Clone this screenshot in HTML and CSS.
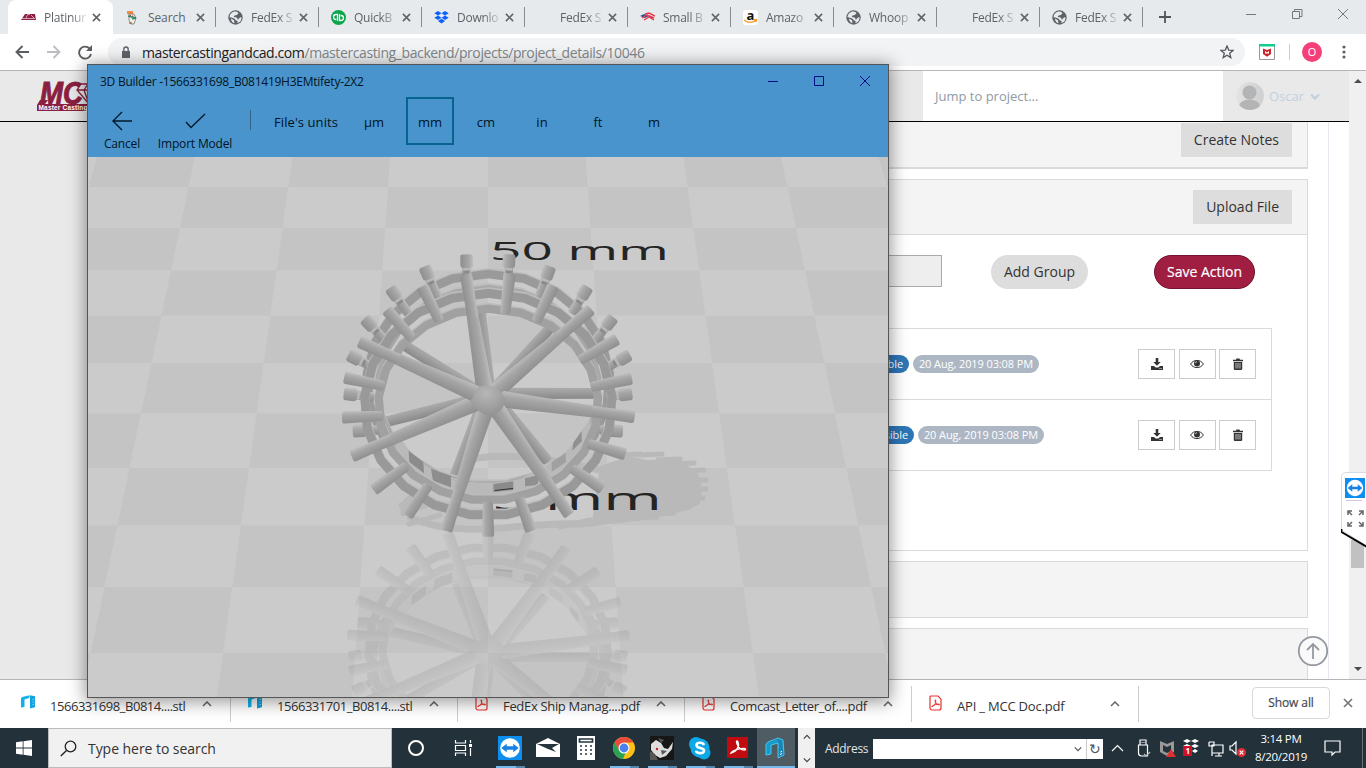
FILE: index.html
```html
<!DOCTYPE html>
<html lang="en">
<head>
<meta charset="utf-8">
<title>Platinum Projects</title>
<link rel="stylesheet" href="styles.css">
</head>
<body>
<svg class="defs" width="0" height="0">
  <defs>
    <symbol id="x" viewBox="0 0 10 10"><path d="M1 1l8 8M9 1l-8 8" fill="none" stroke="currentColor" stroke-width="1.7"/></symbol>
    <symbol id="globe" viewBox="0 0 15 15"><circle cx="7.5" cy="7.5" r="7.2" fill="#5f6368"/><path d="M6.2 1.6C8 1.2 10 2 10.4 3.2L8.8 5 6.5 5.4 5.8 7l3 .5 1 2.2L12 7.4l1.4-.4c.5 3-1.2 5.4-4 6.3l.3-2-2.2-1.4L6.3 8.6 2.4 7.2l-.9.1C1.8 4.2 3.7 2.3 6.2 1.6z" fill="#e6eaed"/><path d="M3 8.4l3 1.8.4 3C4.4 12.7 3 10.8 3 8.4z" fill="#e6eaed"/></symbol>
    <symbol id="caret" viewBox="0 0 10 6"><path d="M1 5l4-4 4 4" fill="none" stroke="currentColor" stroke-width="1.5"/></symbol>
    <symbol id="pdf" viewBox="0 0 13 16"><path d="M2 1h7l3 3.2V13a2 2 0 0 1-2 2H3a2 2 0 0 1-2-2V2a1 1 0 0 1 1-1z" fill="#fff" stroke="#e5322d" stroke-width="1.2"/><path d="M3 11.7c2.5-1 4.2-3.6 3.7-6.3-.2-1-1-.7-.7.3.6 2.500 2 3.900 4 4.300 1 .1.900-1-.3-.9-2 .1-5 .8-6.500 1.900-.6.500-.6 1-.2.700z" fill="none" stroke="#e5322d" stroke-width="1"/></symbol>
    <symbol id="builder" viewBox="0 0 15 14"><path d="M0 12.500V4q0-1.500 1.300-2L8.500.3v2.500L3.500 4.500V12z" fill="#12b0ea"/><path d="M9 .3l5 1v11L9 13.500z" fill="#12a4df"/><path d="M11.500 4.500h1.500M11.500 7h1.500M11.500 9.500h1.500" stroke="#bfe9fa" stroke-width=".6"/></symbol>
    <symbol id="viewer" viewBox="0 0 22 22"><path d="M0 0h22v22H0z" fill="#0d8ff0"/><circle cx="11" cy="11" r="9" fill="#fff"/><path d="M3 11l5-4v2.500h6V7l5 4-5 4v-2.500H8V15z" fill="#1781e3"/></symbol>
    <symbol id="download" viewBox="0 0 12 12"><path d="M4.700 0h2.600v4h2.400L6 7.800 2.300 4h2.400zM0 8h3l1.700 1.500h2.600L9 8h3v4H0z" fill="#333"/><path d="M8 10.500h3" stroke="#bbb" stroke-width=".7"/></symbol>
    <symbol id="eye" viewBox="0 0 14 10"><path d="M.6 5C3.500.2 10.500.2 13.400 5 10.500 9.800 3.500 9.800.6 5z" fill="none" stroke="#333" stroke-width="1"/><circle cx="7" cy="4.400" r="3" fill="#333"/><path d="M5.300 4.200A2 2 0 0 1 7 2.600" stroke="#fff" stroke-width=".7" fill="none"/></symbol>
    <symbol id="trash" viewBox="0 0 10 12"><path d="M0 1.800h3L3.500.5h3L7 1.800h3v1.500H0zM.8 4h8.400v7.200l-.8.800H1.600l-.8-.8z" fill="#333"/><path d="M3 5v5.500M5 5v5.500M7 5v5.500" stroke="#fff" stroke-width=".7"/></symbol>
  </defs>
</svg>

<header class="tabs">
  <div class="tab active"><svg class="fav" viewBox="0 0 15 15"><path d="M0 10l4-6h3l1 1 1-1h5l1 6z" fill="#8d1f41"/><path d="M1 8.500h13M7 4l-2 4m5-3l3 3" stroke="#fff" stroke-width=".6"/></svg><span class="name">Platinur</span><svg class="close"><use href="#x"/></svg></div>
  <div class="tab"><svg class="fav" viewBox="0 0 15 15"><path d="M2 1h6v3H2z" fill="#f28c48"/><path d="M4 4h5l2 4-2 6H6L4 10z" fill="#f4efe5" stroke="#666" stroke-width=".7"/><path d="M3 6l8 2M7 9l4-1" stroke="#28876a" stroke-width="1.800"/><path d="M5 5.500h1m1 .5h1M4 13h3" stroke="#a74020"/></svg><span class="name full">Search</span><svg class="close"><use href="#x"/></svg></div>
  <div class="tab"><svg class="fav"><use href="#globe"/></svg><span class="name">FedEx S</span><svg class="close"><use href="#x"/></svg></div>
  <div class="tab"><svg class="fav" viewBox="0 0 15 15"><circle cx="7.500" cy="7.500" r="7.500" fill="#0ba54c"/><path d="M6.500 10.800V4.500H5a2.500 2.500 0 0 0 0 5h.3M8.500 4.200v6.300H10a2.500 2.500 0 0 0 0-5h-.3" fill="none" stroke="#fff" stroke-width="1.300"/></svg><span class="name">QuickB</span><svg class="close"><use href="#x"/></svg></div>
  <div class="tab"><svg class="fav" viewBox="0 0 15 15"><path d="M4 1l3.500 2.200L4 5.500.3 3.200zM11 1l3.700 2.200L11 5.500 7.500 3.200zM4 5.500l3.500 2.200L4 10 .3 7.700zM11 5.500l3.700 2.200L11 10 7.500 7.700zM4 11l3.500-2.300L11 11l-3.500 2.500z" fill="#0d62fe"/></svg><span class="name">Downlo</span><svg class="close"><use href="#x"/></svg></div>
  <div class="tab"><i class="fav"></i><span class="name">FedEx S</span><svg class="close"><use href="#x"/></svg></div>
  <div class="tab"><svg class="fav" viewBox="0 0 15 15"><path d="M0 6l4-2 5 2-4 2z" fill="#31549b"/><path d="M5 4l4-1 6 3M2 8l5-3 7 3M4 10l5-3 5 3" fill="none" stroke="#e2384c" stroke-width="1.400"/></svg><span class="name">Small B</span><svg class="close"><use href="#x"/></svg></div>
  <div class="tab"><i class="fav amazon">a<svg viewBox="0 0 15 5"><path d="M1 1Q7 5.500 12.500 1.500M11 .8l2.500-.1-.6 2.300" fill="none" stroke="#f49b23" stroke-width="1.400"/></svg></i><span class="name">Amazo</span><svg class="close"><use href="#x"/></svg></div>
  <div class="tab"><svg class="fav"><use href="#globe"/></svg><span class="name">Whoop</span><svg class="close"><use href="#x"/></svg></div>
  <div class="tab"><i class="fav"></i><span class="name">FedEx S</span><svg class="close"><use href="#x"/></svg></div>
  <div class="tab"><svg class="fav"><use href="#globe"/></svg><span class="name">FedEx S</span><svg class="close"><use href="#x"/></svg></div>
  <svg class="plus" viewBox="0 0 12 12"><path d="M6 0v12M0 6h12" stroke="#50555a" stroke-width="1.800"/></svg>
  <svg class="winctl" viewBox="0 0 104 12"><path d="M1 6.500h10M47.500 3.500h7v7h-7zM49.500 3v-1.500h7.500v7H55M93 1l10 10M103 1L93 11" fill="none" stroke="#777"/></svg>
</header>

<nav class="toolbar">
  <svg class="navicons" viewBox="0 0 80 16"><g fill="none" stroke-width="1.900"><path d="M15 8H2.500m6-6l-6 6 6 6" stroke="#5a5e62"/><path d="M33 8h12.500m-6-6l6 6-6 6" stroke="#bcbec1"/><path d="M75.500 4.500A6 6 0 1 0 77 10" stroke="#5a5e62"/></g><path d="M78 1v6h-6z" fill="#5a5e62"/></svg>
  <div class="omnibox">
    <svg class="lock" viewBox="0 0 10 12"><path d="M1 5h8v7H1z" fill="#5f6368"/><path d="M2.800 5V3.200a2.200 2.200 0 0 1 4.400 0V5" fill="none" stroke="#5f6368" stroke-width="1.400"/></svg>
    <span class="url"><b>mastercastingandcad.com</b>/mastercasting_backend/projects/project_details/10046</span>
    <svg class="star" viewBox="0 0 14 14"><path d="M7 1l1.700 4.100 4.400.3-3.400 2.900 1.100 4.300L7 10.200l-3.800 2.400 1.100-4.300L.9 5.400l4.400-.3z" fill="none" stroke="#53575b" stroke-width="1.300"/></svg>
  </div>
  <svg class="shield" viewBox="0 0 16 16"><path d="M.5.500h15v15H.5z" fill="#fff" stroke="#999"/><path d="M0 0h16v2.500H0z" fill="#13ce8b"/><path d="M4 4.500l4 1.600 4-1.600V10l-4 2.800L4 10z" fill="#c9252c"/><path d="M6 7l2 1.500L10 7v2.500H6z" fill="#fff"/></svg>
  <i class="split"></i>
  <span class="avatar">O</span>
  <svg class="dots" viewBox="0 0 4 14"><g fill="#5f6368"><circle cx="2" cy="2" r="1.600"/><circle cx="2" cy="7" r="1.600"/><circle cx="2" cy="12" r="1.600"/></g></svg>
</nav>

<main class="page">
  <div class="site">
    <div class="sitehead">
      <svg class="logo" viewBox="0 0 78 32"><path d="M0 25L3 20h8l-3 4h70v7H0z" fill="#8a1f42"/><text x="3" y="24" class="mark" textLength="43" lengthAdjust="spacingAndGlyphs">MC</text><path d="M44 4h18l4 6-14 14-12-14zM40 10h26M52 24l-5-14 4-6 6 6z" fill="#e9e9e9" stroke="#8a1f42" stroke-width="1.300"/><text x="1.500" y="30" class="logotext" textLength="49">Master Casting</text></svg>
      <div class="jump">Jump to project...</div>
      <div class="user"><svg class="person" viewBox="0 0 28 28"><defs><clipPath id="face"><circle cx="14" cy="14" r="14"/></clipPath><linearGradient id="pg"><stop stop-color="#e4e4e4"/><stop offset="1" stop-color="#cfcfcf"/></linearGradient></defs><g clip-path="url(#face)"><circle cx="14" cy="14" r="14" fill="url(#pg)"/><circle cx="13.500" cy="10.500" r="7" fill="#b3b4b5"/><ellipse cx="13.500" cy="25.500" rx="11" ry="8" fill="#b3b4b5"/></g></svg><span>Oscar</span><svg class="down" viewBox="0 0 10 7"><path d="M1 1.500l4 4 4-4" fill="none" stroke="#c3d0e0" stroke-width="2.400"/></svg></div>
    </div>
    <div class="content">
      <div class="column">
        <section class="panel notes"><button class="btn">Create Notes</button></section>
        <section class="panel files">
          <div class="panelhead"><button class="btn">Upload File</button></div>
          <div class="actions"><div class="field"></div><button class="pill">Add Group</button><button class="pill save">Save Action</button></div>
          <div class="list">
            <div class="row"><span class="tag blue first">Visible</span><span class="tag">20 Aug, 2019 03:08 PM</span><span class="ops"><i><svg class="dl"><use href="#download"/></svg></i><i><svg class="ey"><use href="#eye"/></svg></i><i><svg class="tr"><use href="#trash"/></svg></i></span></div>
            <div class="row"><span class="tag blue second">Visible</span><span class="tag">20 Aug, 2019 03:08 PM</span><span class="ops"><i><svg class="dl"><use href="#download"/></svg></i><i><svg class="ey"><use href="#eye"/></svg></i><i><svg class="tr"><use href="#trash"/></svg></i></span></div>
          </div>
        </section>
        <section class="panel blank"></section>
        <section class="panel tail"></section>
      </div>
    </div>
  </div>
  <div class="scroll"><svg viewBox="0 0 8 5"><path d="M0 5l4-4 4 4z" fill="#4d4d4d"/></svg><i class="thumb"></i><svg viewBox="0 0 8 5"><path d="M0 0l4 4 4-4z" fill="#4d4d4d"/></svg></div>
  <svg class="totop" viewBox="0 0 32 32"><circle cx="16" cy="16" r="14.200" fill="#fafafa" stroke="#9499a1" stroke-width="1.800"/><path d="M16 24V9m-6 6l6-6 6 6" fill="none" stroke="#9499a1" stroke-width="1.800"/></svg>
  <svg class="sidepanel" viewBox="0 0 25 76"><path d="M26 .5H5Q.5 1 .5 5v53l25.500 16z" fill="#fff" stroke="#d5dbe0"/><path d="M.5 57v3L26 75" fill="none" stroke="#000" stroke-width="1.800"/><use href="#viewer" x="4" y="6" width="20" height="20"/><path d="M5 28.500h16" stroke="#ccd"/><g fill="none" stroke="#666" stroke-width="1.500"><path d="M7 43v-4h4M7 39l4 4M18 39h4v4M22 39l-4 4M7 50v4h4M7 54l4-4M18 54h4v-4M22 54l-4-4"/></g></svg>
</main>

<div class="shelf">
  <div class="dlitem"><svg class="bicon"><use href="#builder"/></svg><span class="d1">1566331698_B0814....stl</span><svg class="caret"><use href="#caret"/></svg></div>
  <div class="dlitem"><svg class="bicon"><use href="#builder"/></svg><span class="d1">1566331701_B0814....stl</span><svg class="caret"><use href="#caret"/></svg></div>
  <div class="dlitem"><svg class="picon"><use href="#pdf"/></svg><span class="d3">FedEx Ship Manag....pdf</span><svg class="caret"><use href="#caret"/></svg></div>
  <div class="dlitem"><svg class="picon"><use href="#pdf"/></svg><span class="d4">Comcast_Letter_of....pdf</span><svg class="caret"><use href="#caret"/></svg></div>
  <div class="dlitem"><svg class="picon"><use href="#pdf"/></svg><span class="d5">API _ MCC Doc.pdf</span><svg class="caret"><use href="#caret"/></svg></div>
  <button class="showall">Show all</button>
  <svg class="shelfclose"><use href="#x"/></svg>
</div>

<footer class="taskbar">
  <div class="start"><svg viewBox="0 0 16 16"><path d="M0 2.300L6.700 1.300V7.600H0zM7.500 1.200L16 0v7.600H7.500zM0 8.400h6.700v6.300L0 13.700zM7.500 8.400H16V16l-8.500-1.200z" fill="#fff"/></svg></div>
  <div class="search"><svg viewBox="0 0 17 17"><circle cx="10.500" cy="6.500" r="5.300" fill="none" stroke="#222" stroke-width="1.300"/><path d="M6.500 10.500L.8 16" stroke="#222" stroke-width="1.400"/></svg><span>Type here to search</span></div>
  <div class="apps">
    <div class="app wide"><svg viewBox="0 0 24 24"><circle cx="12" cy="12" r="7" fill="none" stroke="#fff" stroke-width="2"/></svg></div>
    <div class="app wide"><svg viewBox="0 0 24 24"><path d="M4.500 4v3h10V4M4.500 20v-3h10v3M4.500 9.500h10v5h-10zM19.500 4v3m0 5v8" fill="none" stroke="#fff" stroke-width="1.200"/><path d="M18 8h3v3h-3z" fill="#fff"/></svg></div>
    <div class="app viewer run"><svg viewBox="0 0 24 24"><use href="#viewer"/></svg></div>
    <div class="app"><svg viewBox="0 0 24 24"><path d="M0 8l12-6 12 6v13H0z" fill="#fff"/><path d="M1 8h22l-7 4 4 4-8-3z" fill="#26363e"/></svg></div>
    <div class="app"><svg viewBox="0 0 24 24"><path d="M3 0h18v24H3z" fill="#fff"/><path d="M5.500 3h13v3h-13zM6 10h2m3 0h2m3 0h2M6 14h2m3 0h2m3 0h2M6 18h2m3 0h2m3 0h2" fill="none" stroke="#26363e" stroke-width="1.700"/></svg></div>
    <div class="app run"><svg viewBox="0 0 24 24"><circle cx="12" cy="12" r="11" fill="#fbc116"/><path d="M2.500 6.500A11 11 0 0 1 21.500 6.500H12l-5 8z" fill="#e94b3c"/><path d="M2.500 6.500l5 8 6.500 1-3 7.500A11 11 0 0 1 2.500 6.500z" fill="#28a354"/><circle cx="12" cy="12" r="5.500" fill="#fff"/><circle cx="12" cy="12" r="4.400" fill="#4b81ef"/></svg></div>
    <div class="app run"><svg viewBox="0 0 24 24"><path d="M0 0h24v24H0z" fill="#171717"/><path d="M1 8l5-4 5 3 3 5 4 1 5-7-1 7-6 7-6 2-5-3-4-5z" fill="#ddd"/><path d="M0 15l5 3 3 6H0zM8 2l6 2-3 3zM11 14l6 1-5 4z" fill="#565656"/><circle cx="7" cy="13" r="1.200" fill="#c22"/></svg></div>
    <div class="app run"><svg viewBox="0 0 24 24"><circle cx="12" cy="12" r="9.500" fill="#0ca9e6"/><circle cx="8" cy="8" r="7" fill="#0ca9e6"/><circle cx="16" cy="17" r="6.500" fill="#0ca9e6"/><path d="M16 9C15 6 8.500 6 8.500 9.200c0 3.800 7.500 2 7.500 5.500 0 3.400-7.300 3-8 0" fill="none" stroke="#fff" stroke-width="2.600"/></svg></div>
    <div class="app run"><svg viewBox="0 0 24 24"><path d="M1 1h21v21H1z" fill="#c00c10"/><path d="M5 17c5-1 9-6 7-11-.7-2-2-1-1.300 1 1.300 4 4 7 7.600 7 2 0 1.500-1.700-1-1.600-5 .2-11 2.300-12.300 4.600z" fill="none" stroke="#fff" stroke-width="1.400"/></svg></div>
    <div class="app run current"><svg viewBox="0 0 24 24"><path d="M2 19V9q0-2 2-3l10-3v4L7 9v9z" fill="#159bcb"/><path d="M14 2l5 2 1 15-6 3z" fill="#1a86b4"/><path d="M2 19V9q0-2 2-3l10-4 5 2 1 15-6 3V7L7 9v9z" fill="none" stroke="#47c6ed" stroke-width="1"/><path d="M16 18.500l2-1M16.500 16l1.500-.7" stroke="#fff"/></svg></div>
  </div>
  <div class="spin"><svg><use href="#caret"/></svg><svg class="flip"><use href="#caret"/></svg></div>
  <span class="addr">Address</span>
  <div class="addrbox"><svg class="flip"><use href="#caret"/></svg><span>↻</span></div>
  <svg class="tray" viewBox="0 0 140 24"><g fill="none" stroke="#fff" stroke-width="1.200"><path d="M1 15l5.500-5.500L12 15"/><path d="M29 9V4h6v5M27.500 9h9v11h-6q-3 0-3-3zM30.500 6.500h1m1 0h1"/><path d="M33 18l2 2 4-4" stroke="#bbb"/><path d="M101 9h11v8h-11zM98 6v4h5V6h-5m3 4v10m3 0h7m-3-3v3"/><path d="M119 10h2l4-4v12l-4-4h-2z"/></g><path d="M49 5l7 3 7-3v11l-7 4-7-4zM52 9v6l4 2 4-2V9l-4 2z" fill="#999" fill-rule="evenodd"/><path d="M60 13l5 8H55z" fill="#df3030"/><path d="M76 3l4 2-4 2-4-2zM84 3l4 2-4 2-4-2zM76 8l4 2-4 2-4-2zM84 8l4 2-4 2-4-2zM84 13l3 2-3 2-3-2z" fill="#fff"/><path d="M72 10h9v10h-9z" fill="#d1102b"/><text x="74.500" y="18" class="badge">1</text><circle cx="130.500" cy="16.500" r="4.500" fill="#e02d35"/><path d="M128.700 14.700l3.600 3.600m0-3.600l-3.600 3.600" stroke="#fff" stroke-width="1.200"/></svg>
  <div class="clock"><span>3:14 PM</span><span>8/20/2019</span></div>
  <svg class="notif" viewBox="0 0 18 18"><path d="M1 2h15v11h-5l-3 3v-3H1z" fill="none" stroke="#fff" stroke-width="1.200"/></svg>
  <i class="desk"></i>
</footer>

<div class="window">
  <div class="bar">
    <div class="title"><span>3D Builder -1566331698_B081419H3EMtifety-2X2</span><svg viewBox="0 0 104 12"><path d="M1 6.500h10M47.500 1.500h9v9h-9zM93 1l10 10M103 1L93 11" fill="none" stroke="#000c84"/></svg></div>
    <div class="commands">
      <div class="cmd cancel"><svg viewBox="0 0 22 20"><path d="M21 10H2m9-9l-9 9 9 9" fill="none" stroke="#001a2c" stroke-width="1.400"/></svg><span>Cancel</span></div>
      <div class="cmd import"><svg viewBox="0 0 22 20"><path d="M2 11l5 5.500L21 3" fill="none" stroke="#001a2c" stroke-width="1.400"/></svg><span>Import Model</span></div>
      <i class="rule"></i>
      <span class="units">File's units</span>
      <div class="choices"><span>µm</span><span class="on">mm</span><span>cm</span><span>in</span><span>ft</span><span>m</span></div>
    </div>
  </div>
  <svg class="scene" viewBox="88 157 800 540" id="scene">
    <defs><radialGradient id="hub" cx=".45" cy=".25" r=".8"><stop stop-color="#b7b7b7"/><stop offset="1" stop-color="#909090"/></radialGradient></defs>
    <g id="floor"></g>
    <g id="shade" fill="#b9b9b9" stroke="#b9b9b9"></g>
    <text class="scale" transform="translate(490 259.500)" font-size="26" textLength="179" lengthAdjust="spacingAndGlyphs">50 mm</text>
    <text class="scale" transform="translate(492 509.500)" font-size="31" textLength="170" lengthAdjust="spacingAndGlyphs">5 mm</text>
    <g id="mirror" transform="translate(488 651) scale(.965 -.9) translate(-488 -400)" opacity=".24"></g>
    <g id="wheel"></g>
  </svg>
</div>
<script src="scene.js"></script>
</body>
</html>
```
FILE: styles.css
```css
* { box-sizing: border-box; }
body { margin: 0; width: 1366px; height: 768px; overflow: hidden; display: flex; flex-direction: column; position: relative; font-family: "Open Sans", "Noto Sans", sans-serif; color: #333; }
button { font-family: inherit; border: 0; padding: 0; }
.defs { position: absolute; }
.tabs { height: 34px; background: #e6eaed; display: flex; padding-left: 8px; flex: none; }
.tab { width: 103px; flex: none; display: flex; align-items: center; padding-left: 12px; font-size: 12px; color: #5f6368; }
.tab:not(.active)::after { content: ""; width: 1px; height: 20px; background: #888c90; margin-left: auto; }
.tab.active { width: 105px; padding-left: 13px; background: #fff; border-radius: 8px 8px 0 0; }
.fav { width: 15px; height: 15px; flex: none; }
.amazon { background: #fff; border-radius: 3px; font: bold 13px/10px "Open Sans", sans-serif; color: #111; text-align: center; }
.amazon svg { width: 15px; height: 5px; display: block; margin-top: -1px; }
.name { width: 44px; margin-left: 8px; white-space: nowrap; letter-spacing: -.25px; -webkit-mask-image: linear-gradient(90deg, #000 60%, rgba(0,0,0,.15) 98%); mask-image: linear-gradient(90deg, #000 60%, rgba(0,0,0,.15) 98%); }
.full { -webkit-mask-image: none; mask-image: none; letter-spacing: -.1px; }
.close { width: 9px; height: 9px; margin-left: 4px; color: #5f6368; flex: none; }
.plus { width: 12px; height: 12px; margin: 11px 0 0 16px; }
.winctl { width: 104px; height: 12px; margin: 8px 17px 0 auto; }
.toolbar { height: 37px; background: #fff; border-bottom: 1px solid #b6b4b6; display: flex; align-items: center; flex: none; }
.navicons { width: 80px; height: 16px; margin-left: 14px; }
.omnibox { margin-left: 14px; width: 1137px; height: 28px; border-radius: 14px; background: #f1f3f4; display: flex; align-items: center; padding: 0 11px 0 13px; }
.lock { width: 10px; height: 12px; }
.url { font-size: 14px; margin-left: 11px; color: #80868b; letter-spacing: -.4px; white-space: nowrap; }
.url b { font-weight: 400; color: #202124; }
.star { width: 14px; height: 14px; margin-left: auto; }
.shield { width: 16px; height: 16px; margin-left: 14px; }
.split { width: 1px; height: 16px; background: #ccc; margin-left: 14px; }
.avatar { width: 20px; height: 20px; border-radius: 50%; background: #f43f78; color: #fff; font-size: 11px; line-height: 20px; text-align: center; margin-left: 12px; }
.dots { width: 4px; height: 14px; margin-left: 20px; }
.page { height: 608px; display: flex; position: relative; flex: none; }
.site { width: 1349px; display: flex; flex-direction: column; background: #e9e9e9; }
.sitehead { height: 51px; background: #e9e9e9; border-bottom: 1px solid #000; display: flex; flex: none; }
.logo { width: 78px; height: 32px; margin: 9px 0 0 37px; }
.mark { font: italic bold 31px "Liberation Sans", sans-serif; fill: #8a1f42; stroke: #8a1f42; stroke-width: 1px; }
.logotext { font: bold 6.5px "Liberation Sans", sans-serif; fill: #fff; }
.jump { width: 300px; background: #fff; margin-left: 808px; padding-left: 12px; font-size: 13px; line-height: 51px; color: #8f9aa5; }
.user { width: 126px; display: flex; align-items: center; padding-left: 13px; font-size: 13px; color: #c3d0e0; }
.person { width: 28px; height: 28px; margin-right: 5px; }
.down { width: 10px; height: 7px; margin-left: 6px; }
.content { height: 557px; margin-left: 87px; background: #fff; display: flex; padding-right: 20px; overflow: hidden; }
.column { flex: 1; border-right: 1px solid #e4eaf0; padding-right: 20px; display: flex; flex-direction: column; gap: 10px; }
.panel { border: 1px solid #dadada; background: #f4f4f4; flex: none; }
.btn { background: #ddd; color: #333; font-size: 14px; height: 34px; padding: 0 13px 2px; }
.notes { height: 47px; border-top: 0; border-bottom-width: 2px; text-align: right; padding: 1px 15px 0 0; }
.files { height: 372px; background: #fff; }
.panelhead { height: 55px; background: #f4f4f4; border-bottom: 1px solid #dadada; padding: 10px 15px 0; text-align: right; }
.actions { display: flex; padding: 20px 52px 0 0; height: 93px; }
.field { width: 54px; height: 32px; background: #eee; border: 1px solid #aaa; margin-left: 800px; }
.pill { background: #ddd; border-radius: 17px; height: 34px; width: 97px; font-size: 14px; margin-left: 49px; color: #333; padding-bottom: 1px; }
.save { background: #9f1e42; color: #fff; border: 1px solid #74132f; width: 101px; margin-left: auto; -webkit-text-stroke: .2px #fff; }
.list { margin: 0 35px 0 35px; border: 1px solid #dadada; }
.row { height: 70px; display: flex; align-items: center; }
.row + .row { height: 71px; border-top: 1px solid #dadada; }
.tag { background: #adb7c4; color: #fff; border-radius: 9px; height: 18px; line-height: 17px; font-size: 11px; width: 126px; text-align: center; margin-left: 4px; letter-spacing: -.1px; white-space: nowrap; }
.blue { background: #2d76b6; width: 50px; text-align: right; padding-right: 6px; }
.first { margin-left: 735px; }
.second { margin-left: 740px; }
.ops { display: flex; gap: 3.500px; margin: 0 15px 0 auto; }
.ops i { width: 37px; height: 30px; border: 1px solid #ccc; display: flex; align-items: center; justify-content: center; }
.dl { width: 12px; height: 12px; }
.ey { width: 14px; height: 10px; }
.tr { width: 10px; height: 12px; }
.blank { height: 57px; }
.tail { height: 70px; }
.scroll { width: 17px; background: #f0f0f0; display: flex; flex-direction: column; align-items: center; padding: 7px 0; }
.scroll svg { width: 8px; height: 5px; }
.thumb { width: 13px; height: 28px; background: #c1c1c1; margin: 457px 0 auto; }
.totop { position: absolute; left: 1297px; top: 564px; width: 32px; height: 32px; }
.sidepanel { position: absolute; right: 0; top: 401px; width: 25px; height: 76px; }
.shelf { height: 49px; background: #fff; border-top: 1px solid #b6b4b6; display: flex; align-items: center; padding-left: 4px; flex: none; color: #333; font-size: 13px; }
.dlitem { width: 227px; height: 36px; border-right: 1px solid #ccc; display: flex; align-items: center; padding-left: 17px; white-space: nowrap; flex: none; }
.dlitem span { width: 152px; padding-top: 4px; }
.d1 { letter-spacing: -.46px; }
.d3 { letter-spacing: -.32px; }
.d4 { letter-spacing: -.38px; }
.d5 { letter-spacing: -.2px; }
.bicon { width: 15px; height: 14px; margin: -5px 14px 0 0; }
.picon { width: 13px; height: 16px; margin: -3px 15px 0 0; }
.dlitem .picon + span { width: 153px; }
.caret { width: 10px; height: 6px; color: #666; }
.showall { width: 78px; height: 32px; border: 1px solid #d6d8dc; border-radius: 4px; background: #fff; margin: -3px 0 0 113px; font-size: 12px; color: #454b52; -webkit-text-stroke: .2px #454b52; letter-spacing: -.1px; }
.shelfclose { width: 10px; height: 10px; margin: -3px 0 0 13px; color: #777; }
.taskbar { height: 40px; background: #22313a; display: flex; align-items: center; flex: none; }
.start { width: 48px; display: flex; justify-content: center; }
.start svg { width: 16px; height: 16px; }
.search { width: 344px; height: 40px; border: 1px solid #bbb; background: #f1f1f1; display: flex; align-items: center; padding-left: 11px; font-size: 14px; color: #333; letter-spacing: -.05px; }
.search svg { width: 17px; height: 17px; margin-right: 11px; }
.apps { display: flex; height: 40px; }
.app { width: 38px; height: 40px; display: flex; justify-content: center; align-items: center; position: relative; }
.app.wide { width: 47px; }
.app.viewer { margin-left: 5px; }
.app svg { width: 24px; height: 24px; }
.run::after { content: ""; position: absolute; bottom: 0; left: 50%; margin-left: -14px; width: 29px; height: 2px; background: linear-gradient(90deg, #76b9ed 70%, #5386ac 70%); }
.current { background: #505c64; }
.current::after { left: 0; margin: 0; width: 38px; background: #76b9ed; }
.spin { width: 17px; height: 40px; background: #f0f0f0; display: flex; flex-direction: column; justify-content: space-between; align-items: center; padding: 6px 0 5px; margin-left: 3px; color: #444; }
.spin svg, .addrbox svg { width: 8px; height: 6px; }
.flip { transform: scaleY(-1); }
.addr { color: #e3e6e8; font-size: 12px; width: 48px; margin-left: 10px; letter-spacing: -.3px; }
.addrbox { width: 230px; height: 20px; background: #fff; display: flex; align-items: center; justify-content: flex-end; color: #555; margin-top: 1px; }
.addrbox span { width: 17px; border-left: 1px solid #ccc; margin-left: 4px; text-align: center; font-size: 14px; line-height: 19px; height: 20px; }
.tray { width: 140px; height: 24px; margin-left: 8px; }
.badge { font: bold 8px "Open Sans", sans-serif; fill: #fff; }
.clock { width: 64px; display: flex; flex-direction: column; align-items: center; color: #fff; font-size: 11.500px; line-height: 18px; margin-left: -2px; letter-spacing: -.25px; }
.notif { width: 18px; height: 18px; margin-left: 11px; }
.desk { width: 1px; height: 40px; background: #68747b; margin-left: 20px; }
.window { position: absolute; left: 87px; top: 64px; width: 802px; height: 634px; border: 1px solid #555; box-shadow: 0 2px 16px 2px rgba(0,0,0,.4); background: #4a94cd; display: flex; flex-direction: column; color: #001523; }
.bar { height: 92px; }
.title { height: 32px; display: flex; align-items: center; justify-content: space-between; padding: 0 17px 0 12px; font-size: 12px; letter-spacing: -.25px; }
.title svg { width: 104px; height: 12px; }
.commands { display: flex; height: 60px; }
.cmd { display: flex; flex-direction: column; align-items: center; font-size: 12px; line-height: 16px; padding-top: 14px; white-space: nowrap; letter-spacing: -.18px; }
.cmd svg { width: 22px; height: 20px; margin-bottom: 5px; }
.cancel { width: 68px; }
.import { width: 78px; }
.rule { width: 1px; height: 20px; background: #356485; margin: 13px 0 0 16px; }
.units { font-size: 13px; line-height: 50px; margin-left: 23px; width: 76px; white-space: nowrap; letter-spacing: .08px; }
.choices { display: flex; font-size: 13px; gap: 8px; }
.choices span { width: 48px; height: 48px; text-align: center; border: 2px solid transparent; line-height: 46px; }
.choices .on { border-color: #07648f; }
.scene { width: 800px; height: 540px; background: #cbcbcb; display: block; }
.scale { font-family: "Open Sans", sans-serif; fill: #242424; }
```
FILE: scene.js
```js
const NS = 'http://www.w3.org/2000/svg';
function add(parent, name, attrs) {
  const el = document.createElementNS(NS, name);
  for (const k in attrs) el.setAttribute(k, attrs[k]);
  parent.appendChild(el);
  return el;
}

/* checkered floor in perspective */
const floor = document.getElementById('floor');
const rows = [157, 187, 228, 270.6, 315.7, 363, 413.5, 468, 525.5, 587, 653, 723];
const px = (k, y) => 488 + k * (97.7 + (y - 157) * 0.07);
for (let r = 0; r < rows.length - 1; r++) {
  for (let k = -5; k < 5; k++) {
    const a = rows[r], b = rows[r + 1];
    add(floor, 'polygon', {
      points: [px(k, a), a, px(k + 1, a), a, px(k + 1, b), b, px(k, b), b].join(' '),
      fill: (k + r) % 2 === 0 ? '#c4c4c4' : '#cbcbcb'
    });
  }
}

/* shadow cast to the right and under the wheel */
const shade = document.getElementById('shade');
add(shade, 'path', { d: 'M600 466l30-10 16 4 30 0 12 6 10 8 4 14-2 16-12 6-26 6-30 4-40 2z', stroke: 'none' });
[[640, 454], [662, 454], [680, 459], [694, 463], [704, 470], [706, 480], [706, 489], [703, 498], [690, 507], [674, 513], [657, 517]].forEach(([x, y]) =>
  add(shade, 'path', { d: `M${x - 22} ${y + 1}l22 -1`, 'stroke-width': 5, 'stroke-linecap': 'round' }));
add(shade, 'path', { d: 'M408 516Q440 533 500 528T580 524L640 517M420 494Q400 500 405 515M460 463Q490 450 560 462L600 470', fill: 'none', 'stroke-width': 7 });
[[403, 514, 430, 504], [401, 505, 425, 498], [409, 524, 440, 515], [560, 527, 590, 520], [590, 524, 615, 518]].forEach(([a, b, c, d]) =>
  add(shade, 'path', { d: `M${a} ${b}L${c} ${d}`, 'stroke-width': 5, 'stroke-linecap': 'round' }));

/* wheel, in thirds of a pixel from (330, 230) */
const wheel = document.getElementById('wheel');
const g = add(wheel, 'g', { transform: 'translate(330 230) scale(.33333)' });
let gradId = 0;
function beam(x1, y1, x2, y2, w1, w2, dark) {
  const dx = x2 - x1, dy = y2 - y1, len = Math.hypot(dx, dy);
  let nx = -dy / len, ny = dx / len;
  if (ny > 0 || (Math.abs(ny) < 0.15 && nx > 0)) { nx = -nx; ny = -ny; }
  const id = 'b' + gradId++;
  const mx = (x1 + x2) / 2, my = (y1 + y2) / 2, w = Math.max(w1, w2) / 2 + 4;
  const lg = add(g, 'linearGradient', { id, gradientUnits: 'userSpaceOnUse', x1: mx + nx * w, y1: my + ny * w, x2: mx - nx * w, y2: my - ny * w });
  const c = dark ? ['#acacac', '#a0a0a0', '#888'] : ['#bebebe', '#a6a6a6', '#8e8e8e'];
  c.forEach((v, i) => add(lg, 'stop', { offset: [0, 0.35, 1][i], 'stop-color': v }));
  const p = [[x1, y1, w1, 1], [x2, y2, w2, 1], [x2, y2, w2, -1], [x1, y1, w1, -1]].map(([x, y, ww, s]) => {
    const h = ww / 2 - 3;
    return `${x + nx * h * s} ${y + ny * h * s}`;
  });
  add(g, 'path', { d: 'M' + p.join('L') + 'Z', fill: `url(#${id})`, stroke: `url(#${id})`, 'stroke-width': 14, 'stroke-linejoin': 'round' });
}
function ring(cy, rx, ry, w, n, tone) {
  const pts = [];
  for (let i = 0; i < n; i++) {
    const t = (i + 0.5) / n * Math.PI * 2 + Math.PI / 2;
    pts.push((475 + rx * Math.cos(t)).toFixed(1) + ' ' + (cy + ry * Math.sin(t)).toFixed(1));
  }
  const d = 'M' + pts.join('L') + 'Z';
  add(g, 'path', { d, fill: 'none', stroke: '#bcbcbc', 'stroke-width': w, transform: 'translate(0 -5)' });
  add(g, 'path', { d, fill: 'none', stroke: tone, 'stroke-width': w });
}

/* rear spokes and rims */
[[655, 300, 500, 470], [230, 350, 430, 475], [790, 490, 510, 490], [170, 575, 430, 510], [370, 750, 450, 540], [650, 690, 530, 545], [452, 250, 478, 470]]
  .forEach(([a, b, c, d]) => beam(a, b, c, d, 24, 26, true));
ring(480, 330, 292, 9, 21, '#a6a6a6');
ring(466, 335, 296, 10, 21, '#a9a9a9');
ring(456, 365, 324, 26, 21, '#9a9a9a');

/* rear bolts with the cross pieces that tie both rims together */
[[410, 90, 412, 180], [537, 90, 532, 180], [655, 125, 625, 205], [765, 185, 728, 245], [840, 275, 800, 325], [885, 382, 835, 410], [890, 493, 835, 500], [862, 603, 815, 600], [290, 125, 325, 205], [190, 187, 235, 250], [115, 278, 160, 325], [70, 382, 125, 410], [58, 493, 125, 500], [85, 603, 140, 600]]
  .forEach(([a, b, c, d]) => {
    beam(a, b, c, d, 18, 20, false);
    const l = Math.hypot(c - a, d - b), ux = (c - a) / l, uy = (d - b) / l;
    beam(a - ux * 10, b - uy * 10, a + ux * 16, b + uy * 16, 30, 30, false);
    add(g, 'path', { d: `M${a + ux * 24} ${b + uy * 24}l${ux * 8} ${uy * 8}`, stroke: '#b8b8b8', 'stroke-width': 24 });
    add(g, 'path', { d: `M${a + ux * 32} ${b + uy * 32}l${ux * 8} ${uy * 8}`, stroke: '#8a8a8a', 'stroke-width': 16 });
  });

/* inner face of the lower rim, with its openings */
add(g, 'path', { d: 'M215 630L240 665 290 708 370 750 474 762 570 748 655 706 720 655 755 600 780 570 785 620 735 715 655 775 570 808 474 820 370 805 285 760 225 710 190 650Z', fill: '#b9b9b9' });
[['M236 662l44 34 2 34-44-34z', '#8b8b8b'], ['M303 716l60 22v34l-54-20z', '#8d8d8d'], ['M490 762l60-8v26l-60 6z', '#8b8b8b'], ['M585 745l42-10-4 30-38 4z', '#909090'], ['M665 697l42-28v28l-42 28z', '#a0a0a0'], ['M730 638l25-34v30l-28 28z', '#909090'], ['M495 780l54-6v3l-54 6z', '#303030']]
  .forEach(([d, fill]) => add(g, 'path', { d, fill }));

/* front rims */
ring(524, 330, 288, 25, 21, '#a1a1a1');
ring(524, 372, 334, 27, 21, '#999');

/* front paddles; every third one runs on to the hub */
const paddles = [
  [410, 148, 463, 475, 1], [538, 143, 526, 245], [665, 178, 621, 270], [775, 245, 502, 480, 1],
  [852, 333, 755, 388], [894, 448, 790, 470], [902, 560, 520, 508, 1], [875, 670, 780, 643],
  [808, 770, 730, 718], [712, 845, 502, 540, 1], [600, 892, 570, 810], [474, 908, 474, 822],
  [352, 892, 464, 545, 1], [238, 848, 292, 770], [140, 773, 225, 712], [76, 675, 440, 518, 1],
  [48, 562, 152, 558], [54, 445, 156, 467], [98, 340, 442, 494, 1], [178, 248, 242, 320], [282, 180, 326, 268]
];
paddles.forEach(([a, b, c, d, long]) => {
  const l = Math.hypot(c - a, d - b), ux = (c - a) / l, uy = (d - b) / l;
  const x = a - ux * 5, y = b - uy * 5;
  if (!long) { beam(x, y, c, d, 29, 22, false); return; }
  beam(a + ux * 90, b + uy * 90, c, d, 26, 42, false);
  beam(x, y, a + ux * 112, b + uy * 112, 29, 24, false);
});
add(g, 'path', { d: 'M445 470Q480 462 510 480L526 510Q522 545 482 558Q440 552 422 513Z', fill: 'url(#hub)' });

document.getElementById('mirror').appendChild(g.cloneNode(true));
```
